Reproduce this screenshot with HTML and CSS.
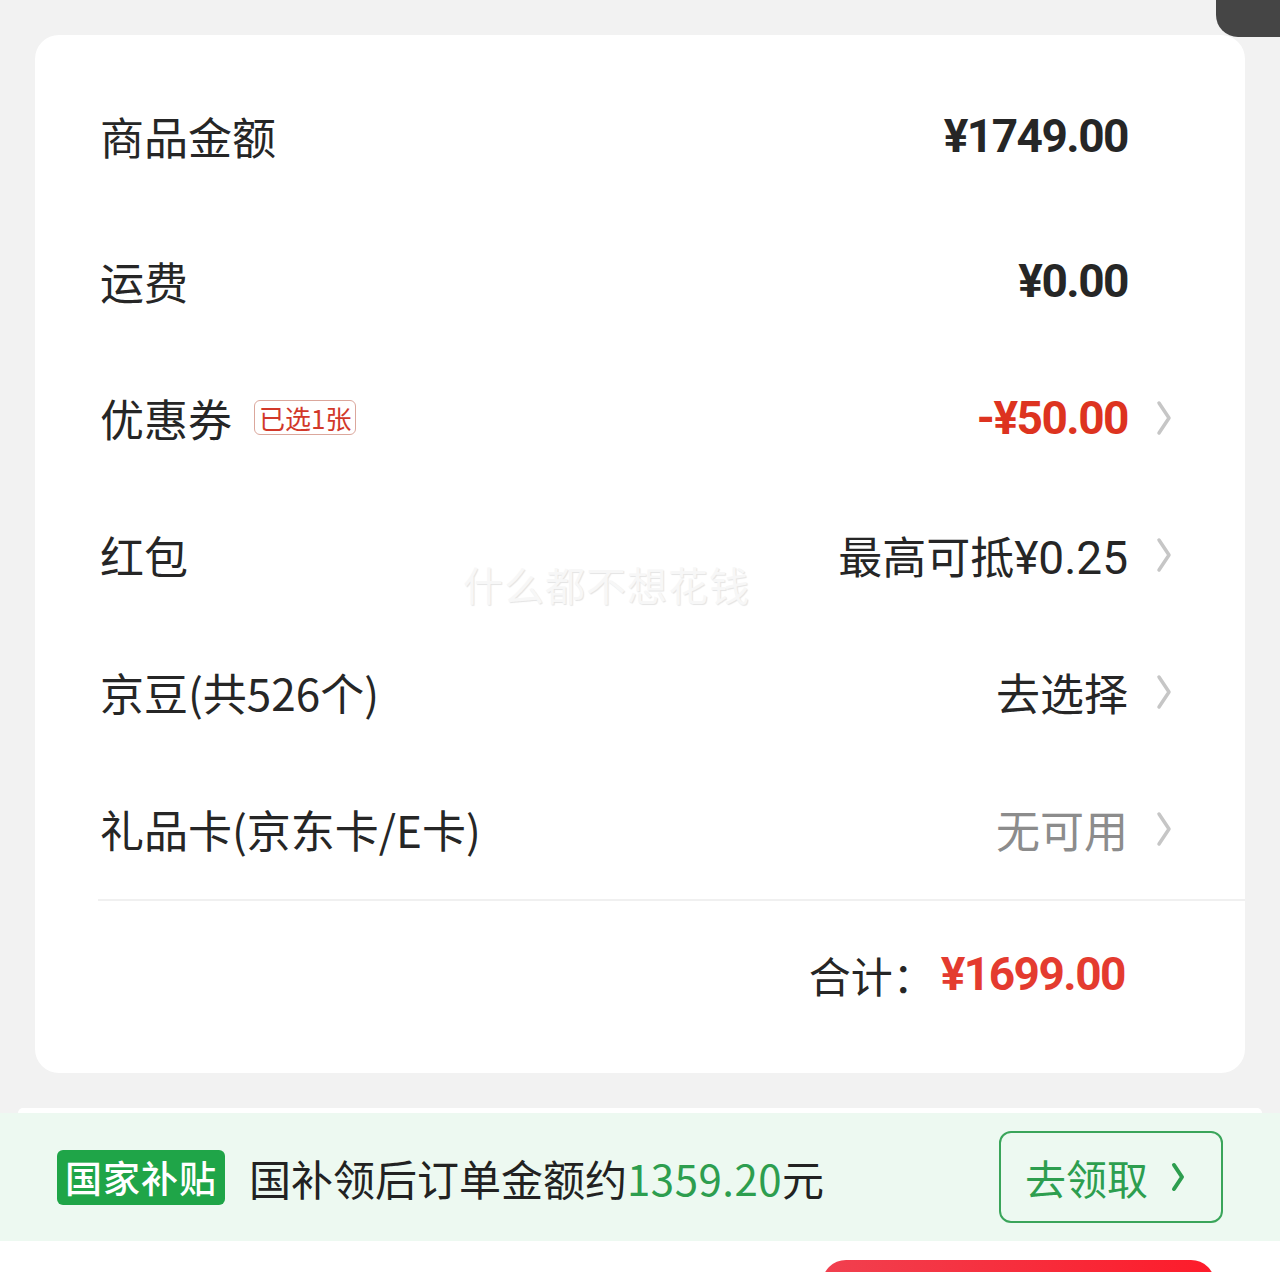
FILE: index.html
```html
<!DOCTYPE html>
<html lang="zh-CN">
<head>
    <meta charset="UTF-8">
    <meta name="viewport" content="width=device-width, initial-scale=1.0">
    <title>订单结算</title>
    <link rel="stylesheet" href="styles.css">
</head>
<body>

    <div class="float-tab"></div>

    <!-- Price summary card -->
    <div class="card">
        <div class="row row-first">
            <span class="label">商品金额</span>
            <span class="value amount">¥1749.00</span>
            <span class="arrow-slot"></span>
        </div>
        <div class="row">
            <span class="label">运费</span>
            <span class="value amount">¥0.00</span>
            <span class="arrow-slot"></span>
        </div>
        <div class="row">
            <span class="label">优惠券</span>
            <span class="tag">已选1张</span>
            <span class="value amount red">-¥50.00</span>
            <span class="arrow-slot">
                <svg class="chevron" viewBox="0 0 16 36"><polyline points="3,3 13,18 3,33"/></svg>
            </span>
        </div>
        <div class="row">
            <span class="label">红包</span>
            <span class="value">最高可抵<span class="num">¥0.25</span></span>
            <span class="arrow-slot">
                <svg class="chevron" viewBox="0 0 16 36"><polyline points="3,3 13,18 3,33"/></svg>
            </span>
        </div>
        <div class="row">
            <span class="label">京豆(共526个)</span>
            <span class="value">去选择</span>
            <span class="arrow-slot">
                <svg class="chevron" viewBox="0 0 16 36"><polyline points="3,3 13,18 3,33"/></svg>
            </span>
        </div>
        <div class="row">
            <span class="label">礼品卡(京东卡/E卡)</span>
            <span class="value muted">无可用</span>
            <span class="arrow-slot">
                <svg class="chevron" viewBox="0 0 16 36"><polyline points="3,3 13,18 3,33"/></svg>
            </span>
        </div>

        <div class="divider"></div>

        <div class="total-row">
            <span class="total-label">合计：</span>
            <span class="total-value">¥1699.00</span>
        </div>

        <div class="watermark">什么都不想花钱</div>
    </div>

    <!-- Next card edge + subsidy banner -->
    <div class="card-edge"></div>
    <div class="subsidy">
        <span class="subsidy-badge">国家补贴</span>
        <span class="subsidy-text">国补领后订单金额约<span class="green">1359.20</span>元</span>
        <a class="subsidy-btn">去领取
            <svg class="btn-chevron" viewBox="0 0 16 32"><polyline points="4,4 12,16 4,28"/></svg>
        </a>
    </div>

    <!-- Bottom bar -->
    <div class="bottom-bar">
        <div class="submit-btn"></div>
    </div>

</body>
</html>
```

FILE: styles.css
```css
/* Basic resets and body styling */
* {
    margin: 0;
    padding: 0;
    box-sizing: border-box;
}

body {
    font-family: "Noto Sans CJK SC", "Noto Sans", sans-serif;
    background-color: #f2f2f2;
    color: #262626;
    width: 1280px;
    height: 1272px;
    overflow: hidden;
    position: relative;
    padding-top: 35px;
}

.float-tab {
    position: absolute;
    top: 0;
    right: 0;
    width: 64px;
    height: 37px;
    background-color: #454545;
    border-bottom-left-radius: 22px;
}

/* Summary card */
.card {
    position: relative;
    margin: 0 35px;
    background-color: #fff;
    border-radius: 24px;
    padding-top: 32px;
    padding-bottom: 26px;
}

.row {
    display: flex;
    align-items: center;
    height: 137px;
    padding-left: 65px;
    padding-right: 73px;
}

.row-first {
    height: 145px;
    padding-bottom: 8px;
}

.label {
    font-size: 44px;
    color: #262626;
    white-space: nowrap;
}

.tag {
    margin-left: 22px;
    font-size: 26px;
    line-height: 33px;
    padding: 0 4px;
    color: #d2382a;
    border: 1px solid #dba79c;
    border-radius: 6px;
}

.value {
    margin-left: auto;
    font-size: 44px;
    color: #262626;
    white-space: nowrap;
}

.value .num {
    font-family: Roboto, "Noto Sans", sans-serif;
    font-size: 46px;
}

.amount {
    font-family: Roboto, "Noto Sans", sans-serif;
    font-weight: 700;
    font-size: 46px;
    letter-spacing: -1.5px;
}

.red {
    color: #dd3320;
}

.muted {
    color: #8c8c8c;
}

.arrow-slot {
    width: 44px;
    display: flex;
    justify-content: flex-end;
}

.chevron {
    width: 16px;
    height: 36px;
    fill: none;
    stroke: #c6c6c6;
    stroke-width: 3.5;
    stroke-linecap: round;
    stroke-linejoin: round;
}

.divider {
    height: 2px;
    margin-top: 2px;
    margin-left: 63px;
    background-color: #f0f0f0;
}

.total-row {
    display: flex;
    align-items: center;
    justify-content: flex-end;
    height: 146px;
    padding-right: 120px;
}

.total-label {
    font-size: 42px;
    color: #262626;
}

.total-value {
    margin-left: 6px;
    font-family: Roboto, "Noto Sans", sans-serif;
    font-weight: 700;
    font-size: 46px;
    letter-spacing: -1.5px;
    color: #e43b2f;
}

.watermark {
    position: absolute;
    left: 428px;
    top: 520px;
    font-size: 40px;
    color: #f7f7f7;
    text-shadow: 1px 1px 1px #e4e4e4;
    letter-spacing: 1px;
}

/* Next card edge and subsidy banner */
.card-edge {
    margin: 35px 18px 0;
    height: 5px;
    background-color: #fff;
    border-radius: 18px 18px 0 0;
}

.subsidy {
    display: flex;
    align-items: center;
    height: 128px;
    background-color: #edf9f1;
    padding-left: 57px;
    padding-right: 57px;
}

.subsidy-badge {
    background-color: #1fa548;
    color: #fff;
    font-size: 37px;
    font-weight: 500;
    line-height: 55px;
    padding: 0 8px;
    border-radius: 6px;
    letter-spacing: 1px;
}

.subsidy-text {
    margin-left: 24px;
    font-size: 42px;
    color: #222;
}

.green {
    color: #2d9e4f;
    letter-spacing: 0.5px;
}

.subsidy-btn {
    margin-left: auto;
    display: flex;
    align-items: center;
    gap: 22px;
    width: 224px;
    height: 92px;
    padding-left: 24px;
    border: 2px solid #3aa55a;
    border-radius: 12px;
    color: #2d9e4f;
    font-size: 41px;
}

.btn-chevron {
    width: 16px;
    height: 32px;
    fill: none;
    stroke: #2d9e4f;
    stroke-width: 4;
    stroke-linecap: round;
    stroke-linejoin: round;
}

/* Bottom bar */
.bottom-bar {
    height: 35px;
    overflow: hidden;
    background-color: #fff;
    display: flex;
    justify-content: flex-end;
    padding-right: 65px;
    padding-top: 19px;
}

.submit-btn {
    flex-shrink: 0;
    width: 393px;
    height: 80px;
    border-radius: 24px;
    background: linear-gradient(90deg, #f1404f, #fd1b2a);
}
```
